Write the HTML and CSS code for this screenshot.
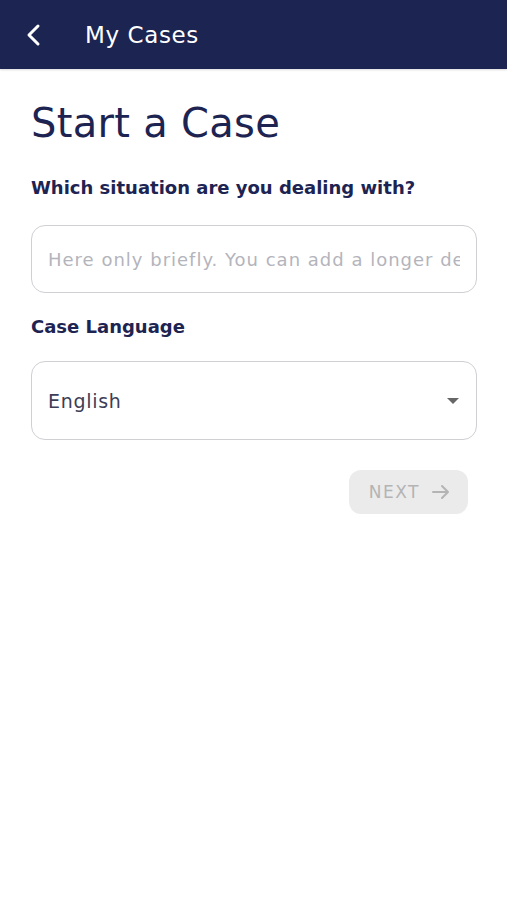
FILE: index.html
```html
<!DOCTYPE html>
<html>
<head>
<meta charset="utf-8">
<title>Start a Case</title>
<link rel="stylesheet" href="styles.css">
</head>
<body>
<div class="topbar">
  <a class="back" href="#">
    <svg width="20" height="24" viewBox="0 0 20 24"><path d="M14 3 L5 12 L14 21" fill="none" stroke="#fff" stroke-width="3" stroke-linecap="round" stroke-linejoin="round"/></svg>
  </a>
  <span class="topbar-title">My Cases</span>
</div>

<div class="content">
  <h1 class="page-title">Start a Case</h1>

  <label class="field-label" for="situation">Which situation are you dealing with?</label>
  <input class="text-field" id="situation" type="text" placeholder="Here only briefly. You can add a longer description later">

  <label class="field-label lang-label">Case Language</label>
  <div class="select-field">
    <span>English</span>
    <svg width="12" height="6" viewBox="0 0 12 6"><path d="M0 0 H12 L6 6 Z" fill="#666"/></svg>
  </div>

  <div class="actions">
    <button class="next-btn" disabled>NEXT
      <svg width="18" height="16" viewBox="0 0 18 16"><path d="M1 8 H16 M10 2 L16 8 L10 14" fill="none" stroke="#b4b4b4" stroke-width="2" stroke-linecap="round" stroke-linejoin="round"/></svg>
    </button>
  </div>
</div>
</body>
</html>
```

FILE: styles.css
```css
body {
    margin: 0;
    background: #fff;
    font-family: "DejaVu Sans", "Noto Sans", sans-serif;
    color: #1d2452;
}

.topbar {
    height: 69px;
    background-color: #1c2451;
    display: flex;
    align-items: center;
    padding-left: 24px;
    box-shadow: 0 1px 2px rgba(0,0,0,.15);
}

.back {
    display: flex;
    width: 20px;
    height: 24px;
}

.topbar-title {
    color: #fff;
    font-size: 23px;
    margin-left: 41px;
    letter-spacing: 0.6px;
}

.content {
    padding: 0 30px 0 31px;
}

.page-title {
    font-weight: normal;
    font-size: 40px;
    margin: 30px 0 0 0;
    line-height: 48px;
    letter-spacing: 0.3px;
}

.field-label {
    display: block;
    font-weight: bold;
    font-size: 18px;
    margin-top: 29px;
    line-height: 24px;
}

.lang-label {
    margin-top: 22px;
}

.text-field {
    display: block;
    box-sizing: border-box;
    width: 100%;
    height: 68px;
    margin-top: 25px;
    padding: 0 16px;
    border: 1px solid #cfcfd4;
    border-radius: 14px;
    font-family: inherit;
    font-size: 18px;
    letter-spacing: 1px;
    outline: none;
}

.text-field::placeholder {
    color: #b4b4bc;
}

.select-field {
    box-sizing: border-box;
    height: 79px;
    margin-top: 22px;
    padding: 0 17px 0 16px;
    border: 1px solid #cfcfd4;
    border-radius: 14px;
    display: flex;
    align-items: center;
    justify-content: space-between;
    font-size: 19px;
    letter-spacing: 0.7px;
    color: #3b3e55;
}

.actions {
    display: flex;
    justify-content: flex-end;
    padding-right: 9px;
    margin-top: 30px;
}

.next-btn {
    display: flex;
    align-items: center;
    gap: 12px;
    height: 44px;
    padding: 0 18px 0 20px;
    border: none;
    border-radius: 12px;
    background-color: #ebebeb;
    color: #b4b4b4;
    font-family: inherit;
    font-size: 17px;
    letter-spacing: 1.5px;
}
```
